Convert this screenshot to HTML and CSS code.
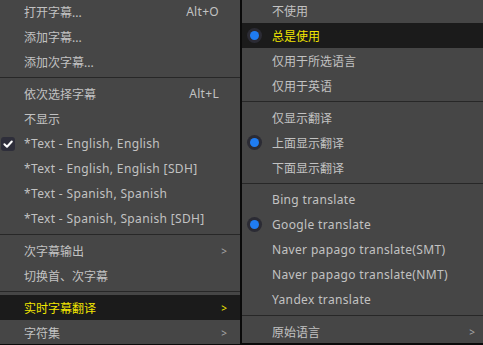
FILE: index.html
```html
<!doctype html>
<html lang="zh-CN">
	<head>
		<meta charset="UTF-8" />
		<title>字幕菜单</title>
		<link rel="stylesheet" href="styles.css">
	</head>
	<body>
		<div class="menus">
			<div class="menu menu-main">
				<div class="item"><span class="mark"></span><span class="label">打开字幕...</span><span class="key">Alt+O</span></div>
				<div class="item"><span class="mark"></span><span class="label">添加字幕...</span></div>
				<div class="item"><span class="mark"></span><span class="label">添加次字幕...</span></div>
				<div class="sep"></div>
				<div class="item"><span class="mark"></span><span class="label">依次选择字幕</span><span class="key">Alt+L</span></div>
				<div class="item"><span class="mark"></span><span class="label">不显示</span></div>
				<div class="item">
					<span class="mark">
						<svg class="check" width="14" height="14" viewBox="0 0 14 14">
							<rect x="0" y="0" width="14" height="14" rx="3" fill="#2e2e3a" />
							<path d="M3.4 7.2 L6 9.7 L10.8 4.5" fill="none" stroke="#fff" stroke-width="2" stroke-linecap="round" stroke-linejoin="round" />
						</svg>
					</span>
					<span class="label en">*Text - English, English</span>
				</div>
				<div class="item"><span class="mark"></span><span class="label en">*Text - English, English [SDH]</span></div>
				<div class="item"><span class="mark"></span><span class="label en">*Text - Spanish, Spanish</span></div>
				<div class="item"><span class="mark"></span><span class="label en">*Text - Spanish, Spanish [SDH]</span></div>
				<div class="sep"></div>
				<div class="item"><span class="mark"></span><span class="label">次字幕输出</span><span class="arrow">&gt;</span></div>
				<div class="item"><span class="mark"></span><span class="label">切换首、次字幕</span></div>
				<div class="sep"></div>
				<div class="item active"><span class="mark"></span><span class="label">实时字幕翻译</span><span class="arrow">&gt;</span></div>
				<div class="item"><span class="mark"></span><span class="label">字符集</span><span class="arrow">&gt;</span></div>
			</div>

			<div class="menu menu-sub">
				<div class="item"><span class="mark"></span><span class="label">不使用</span></div>
				<div class="item active"><span class="mark"><span class="radio"></span></span><span class="label">总是使用</span></div>
				<div class="item"><span class="mark"></span><span class="label">仅用于所选语言</span></div>
				<div class="item"><span class="mark"></span><span class="label">仅用于英语</span></div>
				<div class="sep"></div>
				<div class="item"><span class="mark"></span><span class="label">仅显示翻译</span></div>
				<div class="item"><span class="mark"><span class="radio"></span></span><span class="label">上面显示翻译</span></div>
				<div class="item"><span class="mark"></span><span class="label">下面显示翻译</span></div>
				<div class="sep"></div>
				<div class="item"><span class="mark"></span><span class="label en">Bing translate</span></div>
				<div class="item"><span class="mark"><span class="radio"></span></span><span class="label en">Google translate</span></div>
				<div class="item"><span class="mark"></span><span class="label en">Naver papago translate(SMT)</span></div>
				<div class="item"><span class="mark"></span><span class="label en">Naver papago translate(NMT)</span></div>
				<div class="item"><span class="mark"></span><span class="label en">Yandex translate</span></div>
				<div class="sep"></div>
				<div class="item"><span class="mark"></span><span class="label">原始语言</span><span class="arrow">&gt;</span></div>
			</div>
		</div>
	</body>
</html>
```

FILE: styles.css
```css
html,
body {
	margin: 0;
	height: 100%;
	overflow: hidden;
	background-color: #464646;
}
body {
	font-family: "Noto Sans", "Noto Sans CJK SC", sans-serif;
	font-size: 12px;
	color: #c2c2c2;
}
.menus {
	display: flex;
	align-items: flex-start;
	height: 100%;
	background-color: #0a0a0a;
}
.menu {
	background-color: #464646;
	height: 100%;
}
.menu-main {
	width: 240px;
	margin-top: -1px;
	margin-right: 2px;
}
.menu-sub {
	flex: 1;
	margin-top: -2px;
}
.item {
	display: flex;
	align-items: center;
	height: 25px;
	white-space: nowrap;
}
.item.active {
	background-color: #1b1b1b;
	color: #f2e600;
}
.mark {
	display: flex;
	align-items: center;
	flex: none;
}
.menu-main .mark {
	width: 24px;
	padding-left: 1px;
	box-sizing: border-box;
}
.menu-sub .mark {
	width: 30px;
	padding-left: 6px;
	box-sizing: border-box;
}
.label {
	flex: 1;
}
.label.en {
	letter-spacing: 0.35px;
}
.key {
	letter-spacing: 0.3px;
	padding-right: 21px;
}
.arrow {
	font-size: 10px;
	color: #a8a8a8;
	padding-right: 13px;
}
.menu-sub .arrow {
	padding-right: 8px;
}
.item.active .arrow {
	color: #f2e600;
}
.sep {
	height: 7px;
	display: flex;
	align-items: center;
}
.sep::before {
	content: "";
	display: block;
	width: 100%;
	height: 1px;
	background-color: #272727;
}
.radio {
	display: block;
	width: 9px;
	height: 9px;
	border-radius: 50%;
	background-color: #1f7cf2;
	box-shadow: 0 0 0 3px #2b2b34;
	margin-left: 2px;
}
```
